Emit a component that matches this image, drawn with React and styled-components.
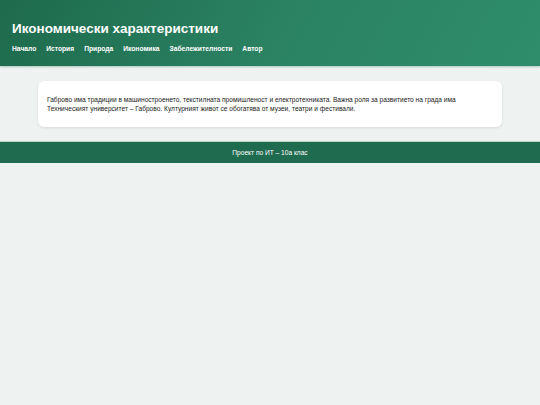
import React from "react";
import styled, { createGlobalStyle } from "styled-components";

const GlobalStyle = createGlobalStyle`
  html, body {
    margin: 0;
    padding: 0;
    background: #eef2f1;
    font-family: "Liberation Sans", Arial, sans-serif;
  }
`;

const Header = styled.header`
  height: 66px;
  box-sizing: border-box;
  padding: 20px 12px 0;
  background: linear-gradient(120deg, #1e6a4d 0%, #2a8262 50%, #2f8d6b 100%);
  color: #fff;
  box-shadow: 0 1px 2px rgba(40, 120, 90, 0.35);
`;

const Title = styled.h1`
  margin: 0;
  font-size: 13.5px;
  line-height: 18px;
  font-weight: 700;
`;

const Nav = styled.nav`
  display: flex;
  gap: 10px;
  margin-top: 7px;
`;

const NavLink = styled.a`
  color: #fff;
  font-size: 6.7px;
  font-weight: 700;
  text-decoration: none;
`;

const Main = styled.main`
  padding: 15px 38px 14px;
`;

const Card = styled.section`
  background: #fff;
  border-radius: 6px;
  padding: 15px 9px 14px;
  box-shadow: 0 1px 3px rgba(0, 0, 0, 0.1);
  font-size: 6.6px;
  line-height: 8.5px;
  color: #222;
`;

const Footer = styled.footer`
  background: #1f6b4f;
  color: #fff;
  text-align: center;
  font-size: 6.6px;
  height: 21px;
  line-height: 21px;
  border-top: 1px solid #b9d6c9;
`;

const links = ["Начало", "История", "Природа", "Икономика", "Забележителности", "Автор"];

export default function App() {
  return (
    <>
      <GlobalStyle />
      <Header>
        <Title>Икономически характеристики</Title>
        <Nav>
          {links.map((l) => (
            <NavLink key={l} href="#">
              {l}
            </NavLink>
          ))}
        </Nav>
      </Header>
      <Main>
        <Card>
          Габрово има традиции в машиностроенето, текстилната промишленост и електротехниката. Важна роля
          за развитието на града има Техническият университет – Габрово. Културният живот се обогатява от
          музеи, театри и фестивали.
        </Card>
      </Main>
      <Footer>Проект по ИТ – 10а клас</Footer>
    </>
  );
}
